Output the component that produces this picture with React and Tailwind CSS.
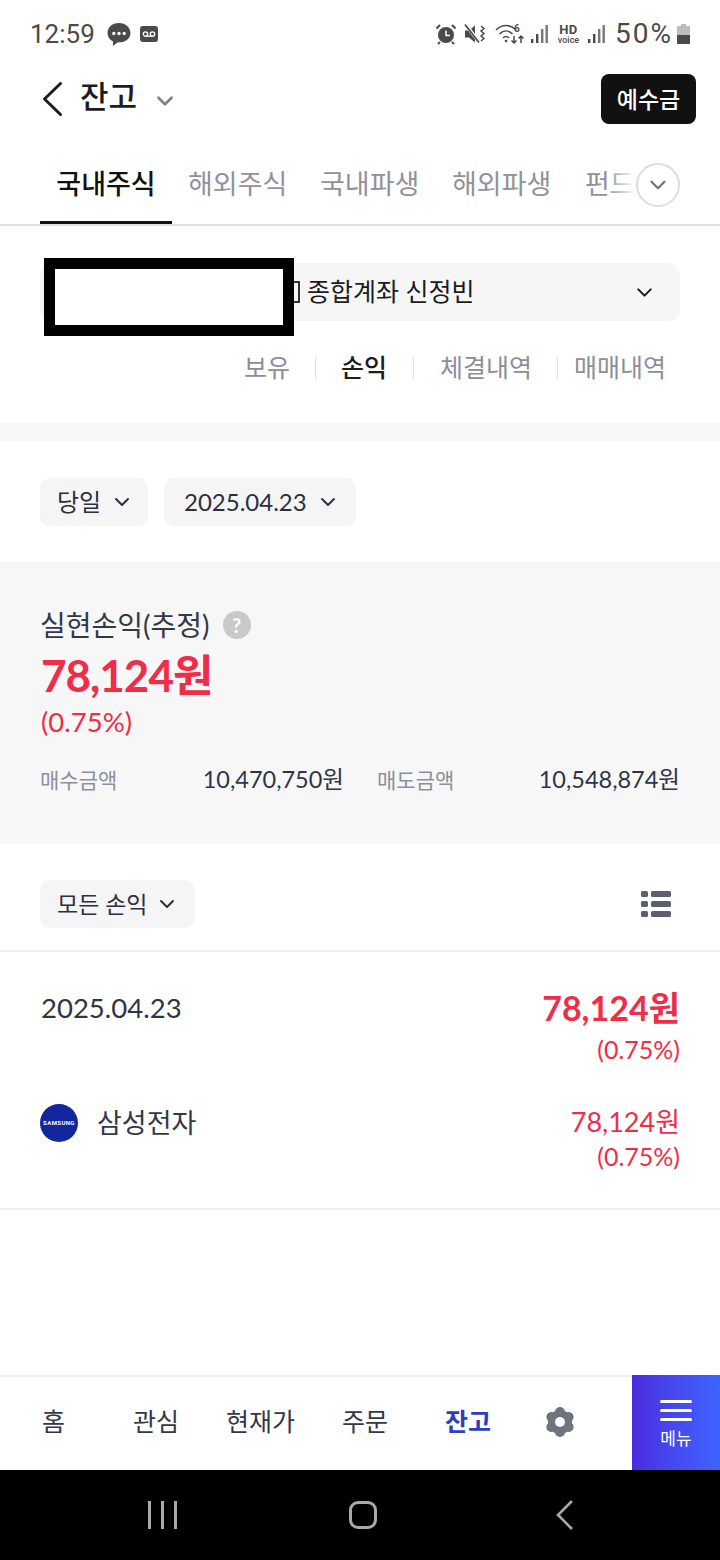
import { ChevronDown } from 'lucide-react';

const font = "font-['Lato','Noto_Sans_CJK_KR',sans-serif]";

function StatusBar() {
    return (
        <div className="h-[68px] pl-[30px] pr-[29px] flex items-center justify-between text-[#4a4a4a]">
            <div className="flex items-center">
                <span className="font-['Roboto',sans-serif] text-[26px] leading-none">12:59</span>
                <svg className="ml-[11px]" width="26" height="25" viewBox="0 0 24 24">
                    <path d="M12 1C5.600 1 1 5 1 10.500c0 3.600 2 6.500 5.300 8.100L6 23l5-3.500h1c6.400 0 11-4 11-9S18.400 1 12 1z" fill="#4a4a4a" />
                    <circle cx="7" cy="11" r="1.600" fill="#fff" />
                    <circle cx="12" cy="11" r="1.600" fill="#fff" />
                    <circle cx="17" cy="11" r="1.600" fill="#fff" />
                </svg>
                <svg className="ml-[7px]" width="20" height="18" viewBox="0 0 20 18">
                    <rect x="1" y="1" width="18" height="16" rx="3" fill="#4a4a4a" />
                    <circle cx="6.500" cy="9" r="2.200" fill="none" stroke="#fff" strokeWidth="1.300" />
                    <circle cx="13.500" cy="9" r="2.200" fill="none" stroke="#fff" strokeWidth="1.300" />
                    <path d="M6.500 11.200h7" stroke="#fff" strokeWidth="1.300" />
                </svg>
            </div>
            <div className="flex items-center">
                <svg width="22" height="22" viewBox="0 0 22 22">
                    <circle cx="11" cy="12" r="8" fill="#4a4a4a" />
                    <path d="M11 7.500V12.500H15" stroke="#fff" strokeWidth="1.500" fill="none" />
                    <path d="M1.500 5.500L5 2M20.500 5.500L17 2M5 19l-2 2M17 19l2 2" stroke="#4a4a4a" strokeWidth="2" />
                </svg>
                <svg className="ml-[7px]" width="23" height="22" viewBox="0 0 23 22">
                    <path d="M1 7.500h4L11 2.500v17l-6-5H1z" fill="#4a4a4a" />
                    <path d="M2 2l13 17" stroke="#fff" strokeWidth="3.500" />
                    <path d="M1 1.500l14 18" stroke="#4a4a4a" strokeWidth="1.800" />
                    <path d="M17 3l3 2.500-3 2.500 3 2.500-3 2.500 3 2.500-3 2.500" stroke="#4a4a4a" strokeWidth="1.500" fill="none" />
                </svg>
                <svg className="ml-[8px]" width="30" height="24" viewBox="0 0 30 24">
                    <path d="M1 8C7 2 15 2 21 8M4.500 12c4-4 9-4 13 0M8 16c2-2 4-2 6 0" stroke="#4a4a4a" strokeWidth="1.600" fill="none" />
                    <circle cx="11" cy="19" r="1.300" fill="#4a4a4a" />
                    <path d="M19 14v7m-2.500-2.500L19 21l2.500-2.500M26 21v-7m-2.500 2.500L26 14l2.500 2.500" stroke="#4a4a4a" strokeWidth="1.500" fill="none" />
                    <text x="19" y="10" fontSize="10" fontWeight="700" fill="#4a4a4a" fontFamily="Roboto">6</text>
                </svg>
                <Signal className="ml-[5px]" />
                <div className="ml-[9px] w-[23px] flex flex-col items-center font-['Roboto',sans-serif] text-[#4a4a4a]">
                    <span className="text-[13px] leading-[11px] font-bold tracking-[0.5px]">HD</span>
                    <span className="text-[9px] leading-[10px] font-medium">voice</span>
                </div>
                <Signal className="ml-[7px]" />
                <span className="ml-[10px] font-['Roboto',sans-serif] text-[28px] leading-none tracking-[2px]">50%</span>
                <svg className="ml-[3px]" width="15" height="20" viewBox="0 0 15 20">
                    <path d="M5 0h5v2h3a1 1 0 0 1 1 1v16a1 1 0 0 1-1 1H2a1 1 0 0 1-1-1V3a1 1 0 0 1 1-1h3z" fill="#bcbcbc" />
                    <path d="M1 11h13v8a1 1 0 0 1-1 1H2a1 1 0 0 1-1-1z" fill="#4a4a4a" />
                </svg>
            </div>
        </div>
    );
}

function Signal({ className }) {
    return (
        <svg className={className} width="18" height="20" viewBox="0 0 18 20" fill="#777">
            <rect x="1" y="15" width="2.400" height="4" fill="#4a4a4a" />
            <rect x="6" y="10" width="2.400" height="9" fill="#4a4a4a" />
            <rect x="11" y="5" width="2.400" height="14" />
            <rect x="15.500" y="1" width="2.400" height="18" />
        </svg>
    );
}

function Gear() {
    const lobes = [0, 60, 120, 180, 240, 300];
    return (
        <svg width="32" height="32" viewBox="0 0 32 32" className="ml-[53px]">
            {lobes.map((a) => (
                <circle key={a} cx="16" cy="6" r="5" fill="#70747f" transform={`rotate(${a} 16 16)`} />
            ))}
            <circle cx="16" cy="16" r="12" fill="#70747f" />
            <circle cx="16" cy="16" r="5" fill="#fff" />
        </svg>
    );
}

function Pill({ children, className = '' }) {
    return (
        <div className={`h-[48px] rounded-[10px] bg-[#f5f5f6] flex items-center text-[#2b3040] ${className}`}>
            {children}
        </div>
    );
}

export default function App() {
    const tabs = ['해외주식', '국내파생', '해외파생'];

    return (
        <div className={`${font} relative w-[720px] h-[1560px] bg-white flex flex-col overflow-hidden`}>
            <StatusBar />

            <div className="h-[62px] pl-[32px] pr-[24px] flex items-center">
                <svg width="46" height="46" viewBox="0 0 46 46" className="-mt-[1px]">
                    <path d="M28.500 7.500L12.500 23l16 15.500" stroke="#1c1c1c" strokeWidth="3" strokeLinecap="round" strokeLinejoin="round" fill="none" />
                </svg>
                <span className="ml-[2px] -mt-[5px] text-[31px] leading-none font-medium text-[#1c1c1c]">잔고</span>
                <ChevronDown size={26} strokeWidth={2.400} className="ml-[15px] mt-[4px] text-[#7d808c]" />
                <button className="ml-auto w-[95px] h-[50px] rounded-[8px] bg-[#111111] text-white text-[23px] font-medium">예수금</button>
            </div>

            <div className="relative mt-[25px] h-[71px] pl-[40px] flex border-b-2 border-[#e0e0e0] overflow-hidden">
                <div className="w-[132px] h-[69px] shrink-0 border-b-[3px] border-[#111111] flex justify-center pt-[10px] text-[27px] leading-[38px] font-medium text-[#111111]">국내주식</div>
                {tabs.map((t, i) => (
                    <div key={t} className={`${i === 0 ? 'ml-[16px]' : 'ml-[33px]'} w-[99px] shrink-0 pt-[10px] text-[27px] leading-[38px] text-[#8f929b] whitespace-nowrap`}>{t}</div>
                ))}
                <div className="ml-[34px] shrink-0 pt-[10px] text-[27px] leading-[38px] text-[#8f929b] whitespace-nowrap">펀드</div>
                <div className="absolute left-[606px] top-0 w-[30px] h-[60px] bg-gradient-to-r from-transparent to-white" />
                <div className="absolute left-[636px] top-[8px] w-[44px] h-[44px] rounded-full bg-white border-2 border-[#dcdcdc] flex items-center justify-center">
                    <ChevronDown size={26} strokeWidth={2} className="text-[#6f7280]" />
                </div>
            </div>

            <div className="mt-[37px] mx-[40px] h-[58px] rounded-[12px] bg-[#f6f6f7] flex items-center pl-[267px] pr-[23px] text-[25px] text-[#1c1c1c]">
                <span>종합계좌 신정빈</span>
                <ChevronDown size={25} strokeWidth={2} className="ml-auto" />
            </div>

            <div className="mt-[26px] h-[42px] pr-[54px] flex items-center justify-end text-[25px] text-[#8b8e97]">
                <span>보유</span>
                <span className="ml-[25px] mr-[25px] w-[1px] h-[22px] bg-[#e3e3e5]" />
                <span className="text-[#1c1c1c] font-medium">손익</span>
                <span className="ml-[26px] mr-[26px] w-[1px] h-[22px] bg-[#e3e3e5]" />
                <span>체결내역</span>
                <span className="ml-[25px] mr-[16px] w-[1px] h-[22px] bg-[#e3e3e5]" />
                <span>매매내역</span>
            </div>

            <div className="mt-[34px] h-[18px] bg-[#f7f7f8]" />

            <div className="mt-[37px] px-[40px] flex gap-[16px]">
                <Pill className="w-[108px] pl-[17px] gap-[9px] text-[24px]">
                    <span>당일</span>
                    <ChevronDown size={24} strokeWidth={2} />
                </Pill>
                <Pill className="w-[192px] pl-[20px] gap-[9px] text-[24px]">
                    <span>2025.04.23</span>
                    <ChevronDown size={24} strokeWidth={2} />
                </Pill>
            </div>

            <div className="mt-[36px] h-[282px] bg-[#f7f7f8] px-[40px] pt-[45px]">
                <div className="flex items-center h-[36px] text-[28px] text-[#333847]">
                    <span>실현손익(추정)</span>
                    <span className="ml-[13px] w-[28px] h-[28px] rounded-full bg-[#c9c9c9] text-white text-[20px] font-bold flex items-center justify-center">?</span>
                </div>
                <div className="mt-[6px] h-[52px] pl-[1px] flex items-center text-[44px] font-bold tracking-[-1px] text-[#f02d48]">78,124원</div>
                <div className="mt-[3px] h-[36px] pl-[1px] flex items-center text-[27.500px] text-[#f02d48]">(0.75%)</div>
                <div className="mt-[22px] flex items-center h-[36px]">
                    <span className="w-[117px] text-[21px] text-[#8b909e]">매수금액</span>
                    <span className="w-[187px] text-right text-[23.500px] text-[#2f3548]">10,470,750원</span>
                    <span className="ml-[33px] w-[100px] text-[21px] text-[#8b909e]">매도금액</span>
                    <span className="ml-auto text-[23.500px] text-[#2f3548]">10,548,874원</span>
                </div>
            </div>

            <div className="mt-[36px] h-[48px] pl-[40px] pr-[48px] flex items-center justify-between">
                <Pill className="w-[155px] pl-[17px] gap-[7px] text-[23px]">
                    <span>모든 손익</span>
                    <ChevronDown size={24} strokeWidth={2} />
                </Pill>
                <svg width="32" height="28" viewBox="0 0 32 28" fill="#5b6070">
                    <rect x="1" y="1" width="7" height="6" rx="1.500" />
                    <rect x="11" y="1" width="20" height="6" rx="1.500" />
                    <rect x="1" y="11" width="7" height="6" rx="1.500" />
                    <rect x="11" y="11" width="20" height="6" rx="1.500" />
                    <rect x="1" y="21" width="7" height="6" rx="1.500" />
                    <rect x="11" y="21" width="20" height="6" rx="1.500" />
                </svg>
            </div>

            <div className="mt-[22px] h-[260px] border-y-2 border-[#eeeeee] px-[40px] pt-[32px]">
                <div className="flex justify-between">
                    <span className="pl-[1px] text-[27.500px] leading-[48px] text-[#2f3548]">2025.04.23</span>
                    <div className="flex flex-col items-end">
                        <span className="text-[34px] leading-[48px] font-bold text-[#f02d48]">78,124원</span>
                        <span className="text-[25px] leading-[34px] text-[#f02d48]">(0.75%)</span>
                    </div>
                </div>
                <div className="mt-[38px] flex justify-between">
                    <div className="flex items-start h-[68px]">
                        <div className="w-[38px] h-[38px] rounded-full bg-[#12279d] text-white text-[6px] leading-[38px] font-bold tracking-[0.4px] text-center font-['Roboto',sans-serif]">SAMSUNG</div>
                        <span className="ml-[19px] -mt-[1px] text-[27px] leading-[40px] text-[#333847]">삼성전자</span>
                    </div>
                    <div className="flex flex-col items-end mt-[1px] text-[27px] leading-[34px] text-[#f02d48]">
                        <span>78,124원</span>
                        <span className="text-[25px]">(0.75%)</span>
                    </div>
                </div>
            </div>

            <div className="mt-auto h-[95px] pb-[3px] border-t-2 border-[#f0f0f0] flex items-center text-[25px] text-[#333847] relative">
                <span className="ml-[42px] shrink-0">홈</span>
                <span className="ml-[68px] shrink-0">관심</span>
                <span className="ml-[47px] shrink-0">현재가</span>
                <span className="ml-[47px] shrink-0">주문</span>
                <span className="ml-[57px] shrink-0 font-bold text-[#2e3fbd]">잔고</span>
                <Gear />
                <div className="absolute right-0 -top-[2px] w-[88px] h-[95px] bg-gradient-to-r from-[#4a2be0] to-[#3d63ff] flex flex-col items-center pt-[25px] text-white">
                    <div className="w-[32px] flex flex-col gap-[6px]">
                        <span className="h-[3px] bg-white rounded-full" />
                        <span className="h-[3px] bg-white rounded-full" />
                        <span className="h-[3px] bg-white rounded-full" />
                    </div>
                    <span className="mt-[7px] text-[17px] leading-[22px]">메뉴</span>
                </div>
            </div>

            <div className="h-[90px] bg-black flex items-center justify-center relative">
                <div className="absolute left-[148px] flex gap-[10px]">
                    <span className="w-[3px] h-[28px] bg-[#a9a9a9]" />
                    <span className="w-[3px] h-[28px] bg-[#a9a9a9]" />
                    <span className="w-[3px] h-[28px] bg-[#a9a9a9]" />
                </div>
                <div className="ml-[5px] w-[28px] h-[28px] rounded-[9px] border-[3px] border-[#a9a9a9]" />
                <svg className="absolute left-[555px]" width="20" height="32" viewBox="0 0 20 32">
                    <path d="M17 2L3 16l14 14" stroke="#a9a9a9" strokeWidth="2.600" fill="none" />
                </svg>
            </div>

            <div className="absolute left-[44px] top-[258px] w-[250px] h-[78px] bg-white border-[11px] border-black" />
            <div className="absolute left-[294px] top-[281px] w-[6px] h-[22px] border-2 border-l-0 border-[#333]" />
        </div>
    );
}
